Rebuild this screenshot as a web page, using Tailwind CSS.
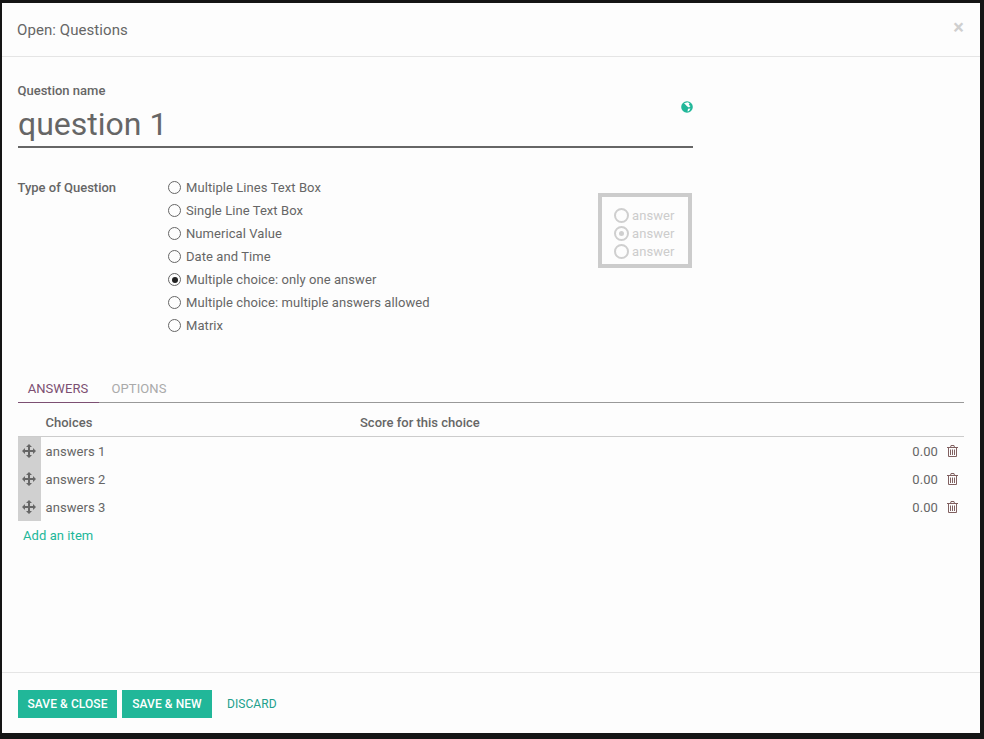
<!DOCTYPE html>
<html>
<head>
<meta charset="utf-8">
<script src="https://cdn.jsdelivr.net/npm/@tailwindcss/browser@4"></script>
</head>
<body class="bg-[#151515] font-['Roboto',sans-serif] text-[13px] text-[#666666] tracking-[0.07px]">
<div class="w-[984px] h-[739px] overflow-hidden pt-[3px] pl-[2px]">
  <div class="w-[978px] h-[730px] bg-[#fdfdfd] flex flex-col">
    <header class="h-[54px] shrink-0 border-b border-[#e5e5e5] flex items-center justify-between pl-[15px] pr-[15px]">
      <h1 class="text-[15px] leading-[20px]">Open: Questions</h1>
      <span class="text-[#cfcfcf] text-[20px] font-bold leading-none mt-[-5px] mr-[1px]">×</span>
    </header>
    <main class="flex-1 pl-[16px] pr-[16px]">
      <div class="w-[675px] relative">
        <div class="font-medium leading-[16px] pt-[26px] tracking-normal ml-[-0.5px]">Question name</div>
        <div class="text-[32px] leading-[41px] h-[42px] pt-[5px] border-b-2 border-[#666666] box-content tracking-normal">question 1</div>
        <svg class="absolute right-0 top-[44px] w-[12px] h-[12px]" viewBox="0 0 12 12"><circle cx="6" cy="6" r="5.8" fill="#21b799"/><path d="M3 2.2 6.6 1.2 8.6 2.2 7.8 4 9.5 5 8 6.4 6.2 5.6 4.6 3.8ZM7 7.8 9.5 7.4 8 10 6.5 10.4Z" fill="#ffffff"/></svg>
      </div>
      <div class="w-[675px] flex mt-[28px]">
        <div class="w-[150px] font-medium leading-[23px] tracking-normal ml-[-0.5px] mr-[0.5px]">Type of Question</div>
        <div class="flex-1 flex flex-col">
          <div class="h-[23px] flex items-center gap-[5px]"><span class="w-[13px] h-[13px] rounded-full border-[1.5px] border-[#666666]"></span>Multiple Lines Text Box</div>
          <div class="h-[23px] flex items-center gap-[5px]"><span class="w-[13px] h-[13px] rounded-full border-[1.5px] border-[#666666]"></span>Single Line Text Box</div>
          <div class="h-[23px] flex items-center gap-[5px]"><span class="w-[13px] h-[13px] rounded-full border-[1.5px] border-[#666666]"></span>Numerical Value</div>
          <div class="h-[23px] flex items-center gap-[5px]"><span class="w-[13px] h-[13px] rounded-full border-[1.5px] border-[#666666]"></span>Date and Time</div>
          <div class="h-[23px] flex items-center gap-[5px]"><span class="w-[13px] h-[13px] rounded-full border-[1.5px] border-[#666666] flex items-center justify-center"><span class="w-[6px] h-[6px] rounded-full bg-[#222222]"></span></span>Multiple choice: only one answer</div>
          <div class="h-[23px] flex items-center gap-[5px]"><span class="w-[13px] h-[13px] rounded-full border-[1.5px] border-[#666666]"></span>Multiple choice: multiple answers allowed</div>
          <div class="h-[23px] flex items-center gap-[5px]"><span class="w-[13px] h-[13px] rounded-full border-[1.5px] border-[#666666]"></span>Matrix</div>
        </div>
        <div class="w-[94px] h-[75px] mt-[17px] mr-[1px] border-[4px] border-[#cccccc] flex flex-col justify-center pt-[6px] pl-[12px] text-[#cccccc]">
          <div class="h-[18px] flex items-center gap-[3px]"><span class="w-[15px] h-[15px] rounded-full border-[2.5px] border-[#cfcfcf]"></span>answer</div>
          <div class="h-[18px] flex items-center gap-[3px]"><span class="w-[15px] h-[15px] rounded-full border-[2.5px] border-[#cfcfcf] flex items-center justify-center"><span class="w-[5px] h-[5px] rounded-full bg-[#cfcfcf]"></span></span>answer</div>
          <div class="h-[18px] flex items-center gap-[3px]"><span class="w-[15px] h-[15px] rounded-full border-[2.5px] border-[#cfcfcf]"></span>answer</div>
        </div>
      </div>
      <div class="mt-[39px] flex border-b border-[#999999] h-[27px]">
        <div class="w-[81px] h-[27px] border-b border-[#7c4f72] text-center text-[#7c4f72] leading-[26px] pr-[1px]">ANSWERS</div>
        <div class="w-[80px] text-center text-[#aaaaaa] leading-[26px]">OPTIONS</div>
      </div>
      <div class="h-[34px] pt-[6px] flex items-center border-b border-[#cccccc] font-medium tracking-normal">
        <div class="w-[342px] pl-[27.5px]">Choices</div>
        <div>Score for this choice</div>
      </div>
      <div class="flex flex-col">
        <div class="h-[28px] flex items-center">
          <div class="w-[23px] h-full bg-[#d0d0d0] flex items-center justify-center pr-[1px]"><svg class="w-[14px] h-[14px]" viewBox="0 0 14 14" fill="#666666"><path d="M7 0 10 3H8V6H11V4L14 7 11 10V8H8V11H10L7 14 4 11H6V8H3V10L0 7 3 4V6H6V3H4Z"/></svg></div>
          <div class="pl-[4.5px] pt-[1px] flex-1">answers 1</div>
          <div class="pt-[1px]">0.00</div>
          <svg class="w-[11px] h-[12px] ml-[9px] mr-[6px]" viewBox="0 0 11 12" fill="none" stroke="#806060" stroke-width="1"><path d="M0 2.5H11M3.5 2.5 4 .5H7L7.5 2.5M1.5 2.5V11.5H9.5V2.5M3.5 4.5V10M5.5 4.5V10M7.5 4.5V10"/></svg>
        </div>
        <div class="h-[28px] flex items-center">
          <div class="w-[23px] h-full bg-[#d0d0d0] flex items-center justify-center pr-[1px]"><svg class="w-[14px] h-[14px]" viewBox="0 0 14 14" fill="#666666"><path d="M7 0 10 3H8V6H11V4L14 7 11 10V8H8V11H10L7 14 4 11H6V8H3V10L0 7 3 4V6H6V3H4Z"/></svg></div>
          <div class="pl-[4.5px] pt-[1px] flex-1">answers 2</div>
          <div class="pt-[1px]">0.00</div>
          <svg class="w-[11px] h-[12px] ml-[9px] mr-[6px]" viewBox="0 0 11 12" fill="none" stroke="#806060" stroke-width="1"><path d="M0 2.5H11M3.5 2.5 4 .5H7L7.5 2.5M1.5 2.5V11.5H9.5V2.5M3.5 4.5V10M5.5 4.5V10M7.5 4.5V10"/></svg>
        </div>
        <div class="h-[28px] flex items-center">
          <div class="w-[23px] h-full bg-[#d0d0d0] flex items-center justify-center pr-[1px]"><svg class="w-[14px] h-[14px]" viewBox="0 0 14 14" fill="#666666"><path d="M7 0 10 3H8V6H11V4L14 7 11 10V8H8V11H10L7 14 4 11H6V8H3V10L0 7 3 4V6H6V3H4Z"/></svg></div>
          <div class="pl-[4.5px] pt-[1px] flex-1">answers 3</div>
          <div class="pt-[1px]">0.00</div>
          <svg class="w-[11px] h-[12px] ml-[9px] mr-[6px]" viewBox="0 0 11 12" fill="none" stroke="#806060" stroke-width="1"><path d="M0 2.5H11M3.5 2.5 4 .5H7L7.5 2.5M1.5 2.5V11.5H9.5V2.5M3.5 4.5V10M5.5 4.5V10M7.5 4.5V10"/></svg>
        </div>
      </div>
      <div class="pl-[5px] h-[28px] leading-[30px] text-[#21b799]">Add an item</div>
    </main>
    <footer class="h-[61px] shrink-0 border-t border-[#e5e5e5] flex items-center pl-[16px] pt-[1px]">
      <div class="h-[28px] w-[99px] bg-[#21b799] text-white font-medium text-[12px] flex items-center justify-center">SAVE &amp; CLOSE</div>
      <div class="h-[28px] w-[90px] ml-[5px] bg-[#21b799] text-white font-medium text-[12px] flex items-center justify-center">SAVE &amp; NEW</div>
      <div class="ml-[15px] text-[12px] text-[#21a08c]">DISCARD</div>
    </footer>
  </div>
</div>
</body>
</html>
